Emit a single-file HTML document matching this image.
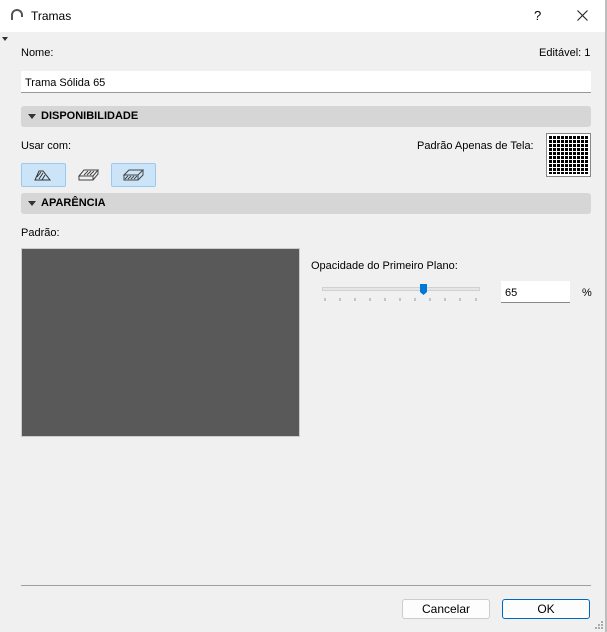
<!DOCTYPE html>
<html><head><meta charset="utf-8"><style>
*{box-sizing:border-box}
body{margin:0;width:607px;height:632px;overflow:hidden;background:#f0f0f0;font-family:"Liberation Sans",Arial,sans-serif;font-size:11px;color:#000;position:relative}
.a{position:absolute}
.title{left:0;top:0;width:607px;height:32px;background:#fff}
.hdr{left:21px;width:570px;height:21px;background:#d6d6d6;border-radius:3px;font-weight:bold;font-size:11px;line-height:21px;padding-left:20px}
.hdr:before{content:"";position:absolute;left:7px;top:8px;border-left:4px solid transparent;border-right:4px solid transparent;border-top:5px solid #333}
.btn{height:20px;border:1px solid #ccc;border-radius:3px;background:#fdfdfd;text-align:center;line-height:18px;font-size:12px}
</style></head><body>
<div class="a title"></div>
<svg class="a" style="left:10px;top:9px" width="14" height="12"><path d="M2 11 V6 A5 5 0 0 1 12 6 V8" fill="none" stroke="#555" stroke-width="2"/></svg>
<div class="a" style="left:31px;top:9px;font-size:12px">Tramas</div>
<div class="a" style="left:534px;top:8px;font-size:13px">?</div>
<svg class="a" style="left:577px;top:10px" width="11" height="11"><path d="M0.5 0.5L10.5 10.5M10.5 0.5L0.5 10.5" stroke="#222" stroke-width="1.1"/></svg>
<div class="a" style="left:605px;top:0;width:2px;height:632px;background:#bdbdbd"></div>
<div class="a" style="left:2px;top:37px;border-left:3px solid transparent;border-right:3px solid transparent;border-top:4px solid #333"></div>
<div class="a" style="left:21px;top:47px">Nome:</div>
<div class="a" style="left:539px;top:47px">Editável: 1</div>
<div class="a" style="left:21px;top:71px;width:570px;height:22px;background:#fff;border-bottom:1px solid #999;padding:6px 4px;font-size:11px">Trama Sólida 65</div>
<div class="a hdr" style="top:106px">DISPONIBILIDADE</div>
<div class="a" style="left:21px;top:140px">Usar com:</div>
<div class="a" style="left:417px;top:140px">Padrão Apenas de Tela:</div>
<div class="a" style="left:546px;top:133px;width:45px;height:44px;border:1px solid #888;background:#fff;padding:2px">
<div style="width:39px;height:38px;background-color:#000;background-image:linear-gradient(90deg,transparent 3px,#fff 3px),linear-gradient(transparent 3px,#fff 3px);background-size:4px 4px"></div></div>
<div class="a" style="left:21px;top:163px;width:45px;height:24px;background:#cce4f7;border:1px solid #99c9ef;border-radius:2px"></div>
<svg class="a" style="left:33px;top:168px" width="20" height="14"><path d="M2 12 L6 3 H10 L17 12 Z M4 9 L8 4 M6 11 L10 5 M9 12 L12 7" fill="none" stroke="#333" stroke-width="1"/></svg>
<svg class="a" style="left:78px;top:168px" width="22" height="14"><path d="M1 8 L6 2 H20 L15 8 Z M1 8 V12 H15 V8 M15 12 L20 6 V2 M6 7 L10 3 M9 7 L13 3 M12 7 L16 3" fill="none" stroke="#444" stroke-width="1"/></svg>
<div class="a" style="left:111px;top:163px;width:45px;height:24px;background:#cce4f7;border:1px solid #99c9ef;border-radius:2px"></div>
<svg class="a" style="left:123px;top:168px" width="22" height="14"><path d="M1 7 L6 2 H20 L15 7 Z M1 7 V12 H15 V7 M15 12 L20 7 V2" fill="none" stroke="#444" stroke-width="1"/><path d="M2 11 L5 8 M5 11 L8 8 M8 11 L11 8 M11 11 L14 8" stroke="#444"/></svg>
<div class="a hdr" style="top:193px">APARÊNCIA</div>
<div class="a" style="left:21px;top:227px">Padrão:</div>
<div class="a" style="left:21px;top:248px;width:279px;height:189px;background:#595959;border:1px solid #ccc"></div>
<div class="a" style="left:311px;top:260px">Opacidade do Primeiro Plano:</div>
<div class="a" style="left:322px;top:287px;width:158px;height:4px;background:#e6e6e6;border:1px solid #d0d0d0"></div>
<svg class="a" style="left:320px;top:282px" width="165" height="20">
<g stroke="#999"><path d="M5 16V19M20 16V19M35 16V19M50 16V19M65 16V19M80 16V19M95 16V19M110 16V19M125 16V19M140 16V19M156 16V19"/></g>
<path d="M100 2H107V10L103.5 13L100 10Z" fill="#0078d7"/></svg>
<div class="a" style="left:501px;top:281px;width:69px;height:22px;background:#fff;border-bottom:1px solid #888;padding:6px 4px">65</div>
<div class="a" style="left:582px;top:287px">%</div>
<div class="a" style="left:21px;top:585px;width:570px;height:1px;background:#a0a0a0"></div>
<div class="a btn" style="left:402px;top:599px;width:88px">Cancelar</div>
<div class="a btn" style="left:502px;top:599px;width:88px;border-color:#0067c0">OK</div>
<svg class="a" style="left:595px;top:621px" width="10" height="10" fill="#aaa"><rect x="6" y="0" width="2" height="2"/><rect x="3" y="3" width="2" height="2"/><rect x="6" y="3" width="2" height="2"/><rect x="0" y="6" width="2" height="2"/><rect x="3" y="6" width="2" height="2"/><rect x="6" y="6" width="2" height="2"/></svg>
</body></html>
